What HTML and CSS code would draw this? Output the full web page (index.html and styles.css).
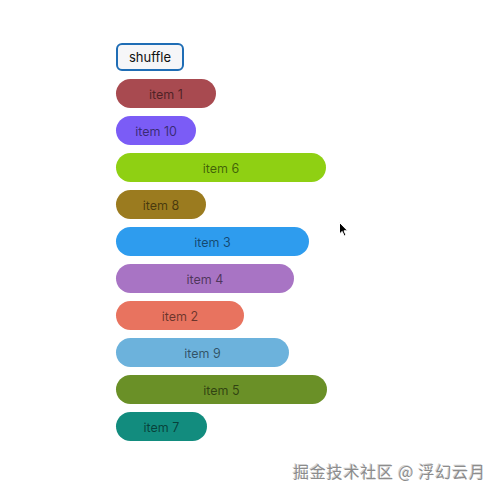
FILE: index.html
```html
<!DOCTYPE html>
<html>
<head>
<meta charset="utf-8">
<link rel="stylesheet" href="styles.css">
</head>
<body>
<div class="list">
  <button class="shuffle">shuffle</button>
  <div class="item c1" style="width:100px">item 1</div>
  <div class="item c10" style="width:80px">item 10</div>
  <div class="item c6" style="width:210px">item 6</div>
  <div class="item c8" style="width:90px">item 8</div>
  <div class="item c3" style="width:193px">item 3</div>
  <div class="item c4" style="width:178px">item 4</div>
  <div class="item c2" style="width:128px">item 2</div>
  <div class="item c9" style="width:173px">item 9</div>
  <div class="item c5" style="width:211px">item 5</div>
  <div class="item c7" style="width:91px">item 7</div>
</div>
<svg class="cursor" width="10" height="16" viewBox="0 0 10 16">
  <path d="M0.5 0.5 L0.5 12 L3.2 9.4 L5.2 14 L7 13.2 L5 8.8 L8.6 8.8 Z" fill="#000" stroke="#fff" stroke-width="1"/>
</svg>
<div class="watermark">掘金技术社区 @ 浮幻云月</div>
</body>
</html>
```
FILE: styles.css
```css
html, body {
  margin: 0;
  padding: 0;
  background: #ffffff;
  width: 500px;
  height: 496px;
  overflow: hidden;
  position: relative;
  font-family: Inter, "Noto Sans", sans-serif;
}
.list {
  display: flex;
  flex-direction: column;
  align-items: flex-start;
  gap: 8px;
  padding: 43px 0 0 116px;
}
.shuffle {
  height: 28px;
  padding: 0 11px;
  border: 2px solid #1f6db5;
  border-radius: 6px;
  background: #f6f6f8;
  color: #111;
  font-family: Inter, "Noto Sans", sans-serif;
  font-size: 13px;
  font-weight: 400;
  line-height: 24px;
}
.item {
  box-sizing: border-box;
  height: 29px;
  padding-top: 1px;
  border-radius: 15px;
  display: flex;
  align-items: center;
  justify-content: center;
  font-size: 12.5px;
  color: rgba(0, 0, 0, 0.55);
}
.c1 { background: #a84a50; }
.c10 { background: #7b5cf6; }
.c6 { background: #8fd013; }
.c8 { background: #9b7b1f; }
.c3 { background: #2e9cee; }
.c4 { background: #a874c4; }
.c2 { background: #e8735f; }
.c9 { background: #6cb2dc; }
.c5 { background: #6a9027; }
.c7 { background: #128c7e; }
.cursor {
  position: absolute;
  left: 339px;
  top: 222px;
}
.watermark {
  position: absolute;
  left: 293px;
  top: 461px;
  font-family: "Noto Sans CJK SC", sans-serif;
  font-size: 16px;
  letter-spacing: 0.8px;
  line-height: 20px;
  color: #8c8c8c;
  text-shadow: 1px 1px 0 #ffffff, -1px -1px 0 #d4d4d4;
  white-space: nowrap;
}
```
